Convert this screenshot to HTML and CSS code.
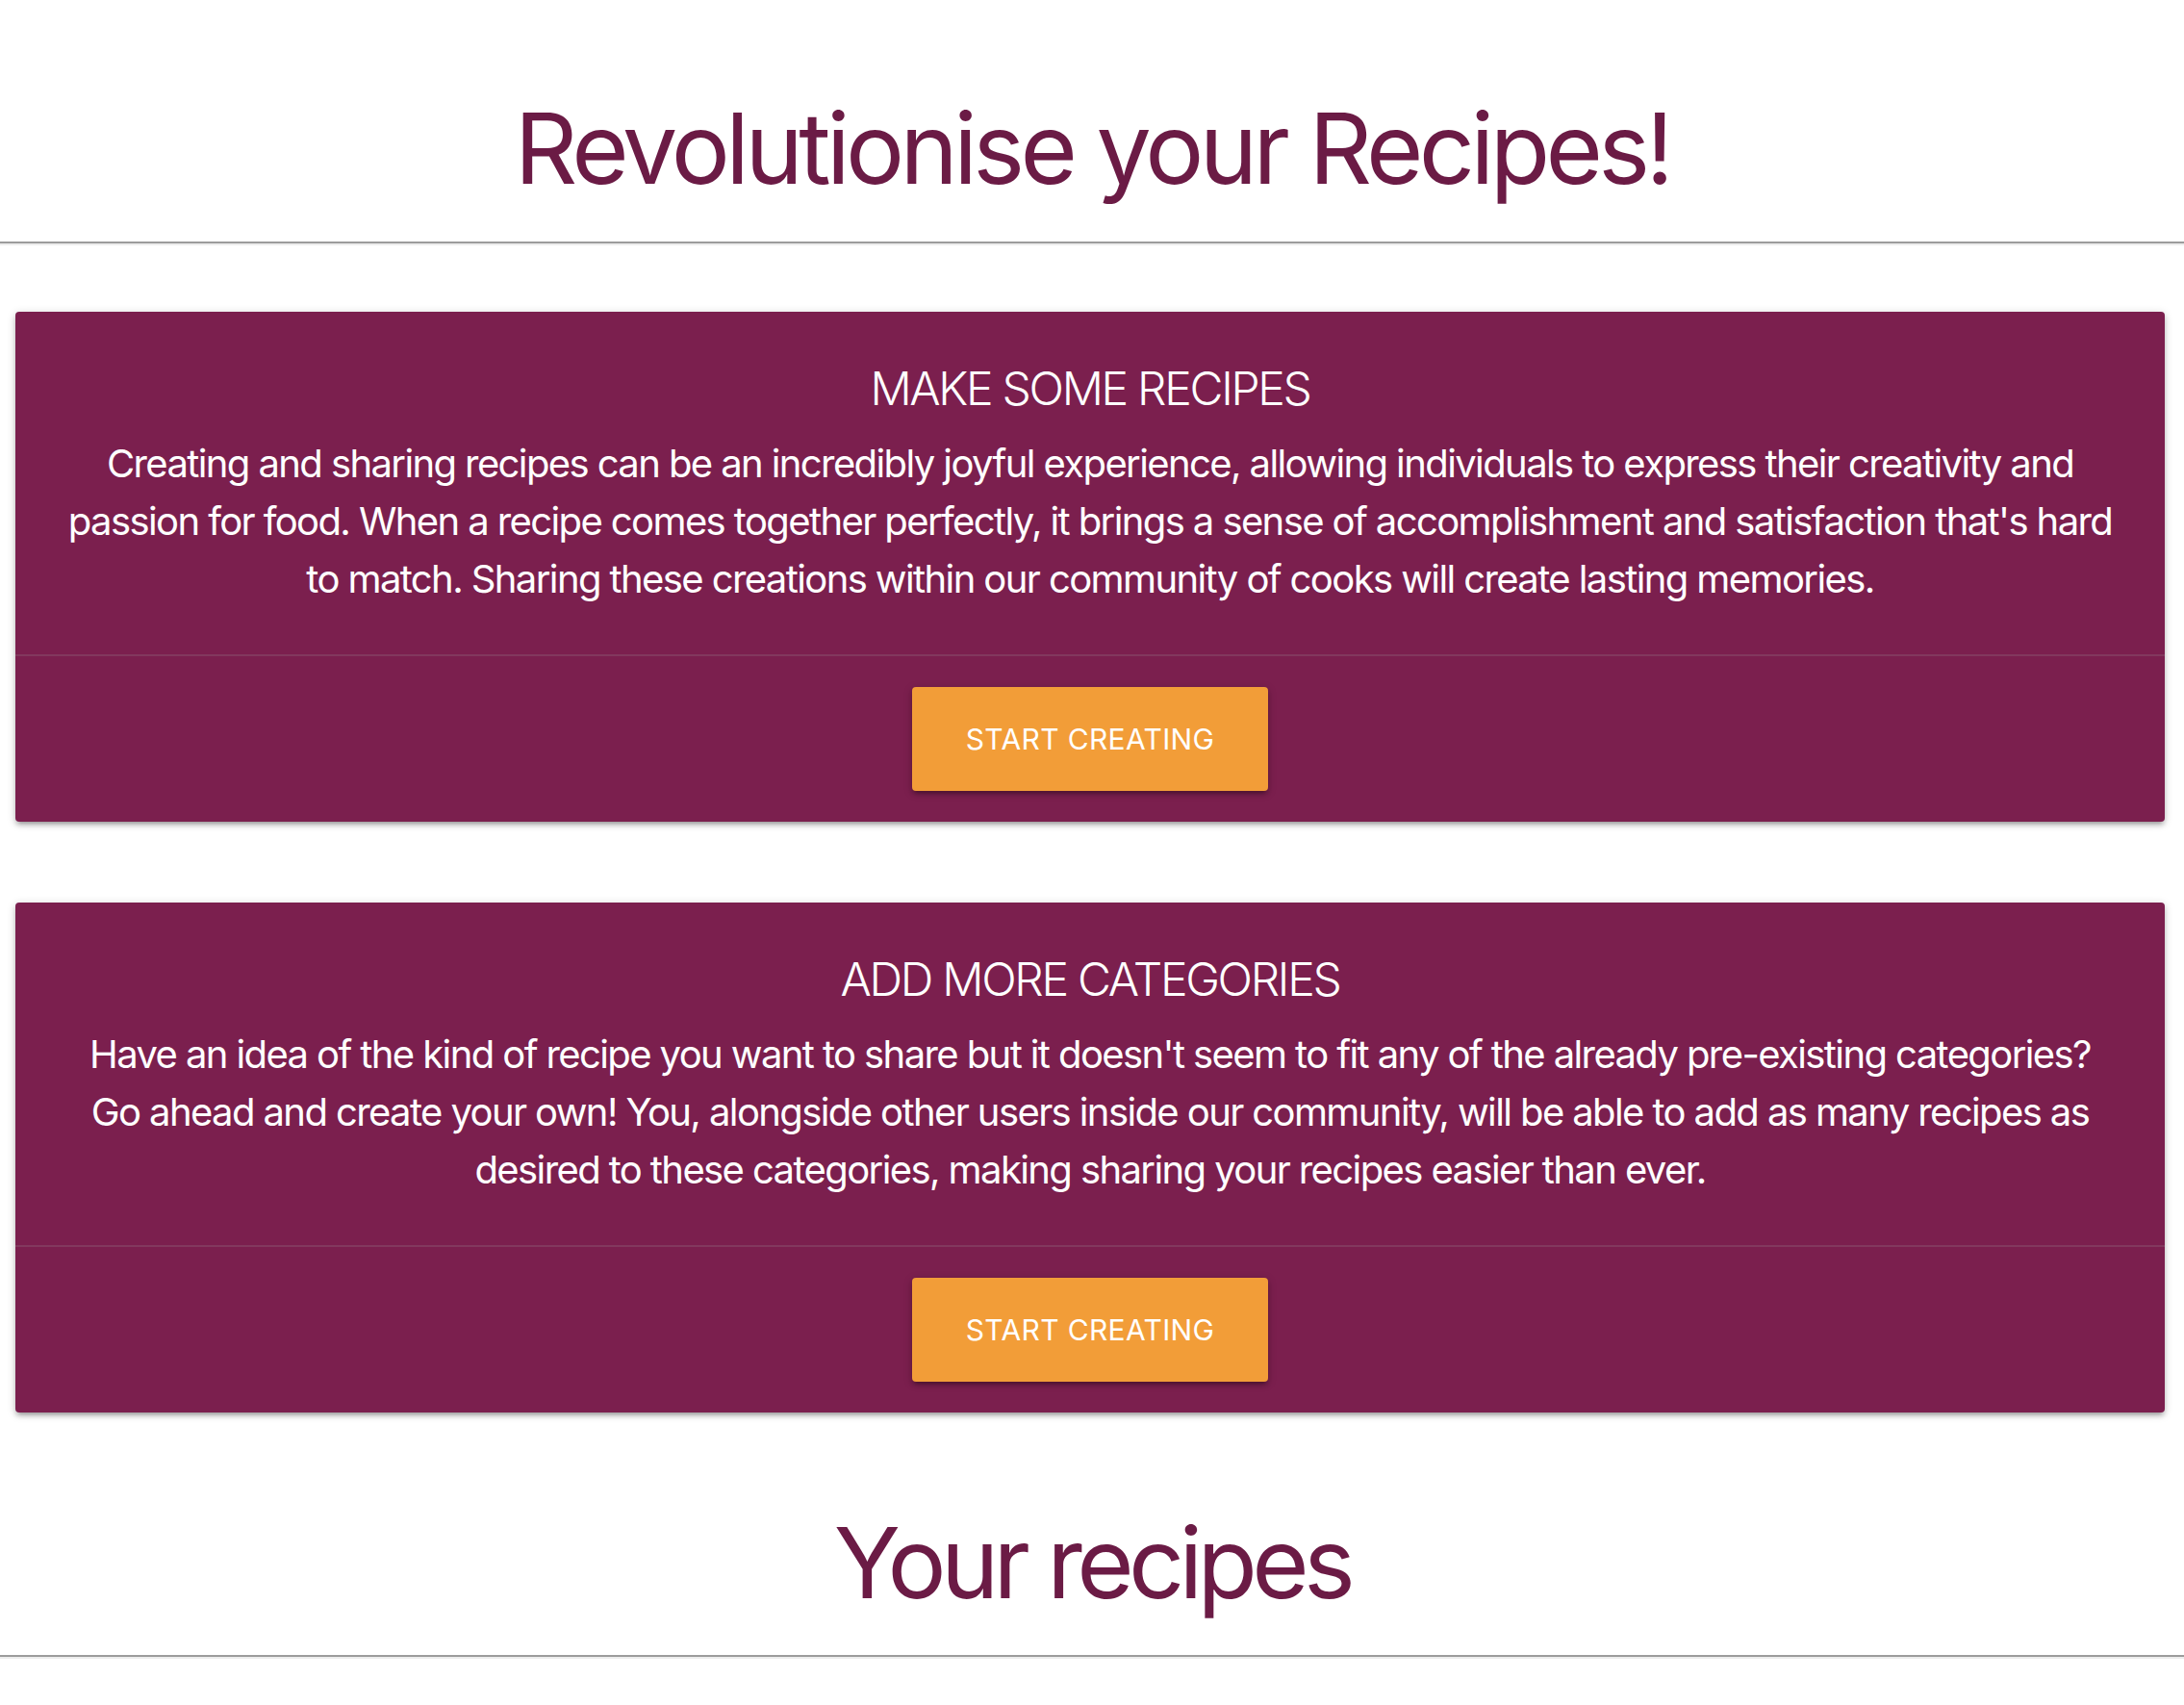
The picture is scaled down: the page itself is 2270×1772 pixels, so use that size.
FILE: index.html
```html
<!DOCTYPE html>
<html lang="en">
<head>
<meta charset="utf-8">
<title>Revolutionise your Recipes!</title>
<link rel="stylesheet" href="styles.css">
</head>
<body>
  <header class="section-head section-head--top">
    <h1 class="page-title">Revolutionise your Recipes!</h1>
  </header>
  <hr class="rule">

  <main class="cards">
    <section class="card">
      <div class="card-content">
        <h2 class="card-title">MAKE SOME RECIPES</h2>
        <p class="card-text">Creating and sharing recipes can be an incredibly joyful experience, allowing individuals to express their creativity and<br>passion for food. When a recipe comes together perfectly, it brings a sense of accomplishment and satisfaction that's hard<br>to match. Sharing these creations within our community of cooks will create lasting memories.</p>
      </div>
      <div class="card-action">
        <a class="btn" href="#">START CREATING</a>
      </div>
    </section>

    <section class="card">
      <div class="card-content">
        <h2 class="card-title">ADD MORE CATEGORIES</h2>
        <p class="card-text">Have an idea of the kind of recipe you want to share but it doesn't seem to fit any of the already pre-existing categories?<br>Go ahead and create your own! You, alongside other users inside our community, will be able to add as many recipes as<br>desired to these categories, making sharing your recipes easier than ever.</p>
      </div>
      <div class="card-action">
        <a class="btn" href="#">START CREATING</a>
      </div>
    </section>
  </main>

  <header class="section-head section-head--bottom">
    <h1 class="page-title page-title--tight">Your recipes</h1>
  </header>
  <hr class="rule">
</body>
</html>
```

FILE: styles.css
```css
html, body {
  margin: 0;
  padding: 0;
  background: #ffffff;
}

body {
  font-family: "Inter", "Roboto", "Liberation Sans", sans-serif;
  color: #333;
}

.section-head {
  text-align: center;
}

.section-head--top {
  padding-top: 93px;
}

.section-head--bottom {
  padding-top: 95px;
}

.page-title {
  margin: 0 0 36px 0;
  font-size: 102px;
  line-height: 122px;
  font-weight: 400;
  letter-spacing: -4.6px;
  color: #6b1b45;
}

.page-title--tight {
  margin-bottom: 35px;
  letter-spacing: -5.7px;
}

.rule {
  margin: 0;
  height: 0;
  border: 0;
  border-top: 2px solid #9c9c9c;
  border-bottom: 2px solid #ededed;
}

.cards {
  padding: 69px 20px 0 16px;
  display: flex;
  flex-direction: column;
  gap: 84px;
}

.card {
  background: #7b1f4e;
  border-radius: 4px;
  box-shadow: 0 4px 4px 0 rgba(0,0,0,0.14), 0 6px 2px -4px rgba(0,0,0,0.12), 0 2px 10px 0 rgba(0,0,0,0.2);
  color: #ffffff;
}

.card-content {
  padding: 48px;
  text-align: center;
}

.card-title {
  margin: 0 0 16px 0;
  font-size: 48px;
  line-height: 64px;
  font-weight: 300;
  letter-spacing: -2.3px;
  color: #ffffff;
}

.card-text {
  margin: 0;
  font-size: 40px;
  line-height: 60px;
  font-weight: 400;
  letter-spacing: -1.6px;
  white-space: nowrap;
}

.card-action {
  border-top: 2px solid rgba(160,160,160,0.2);
  padding: 32px 48px;
  display: flex;
  justify-content: center;
}

.btn {
  display: inline-flex;
  align-items: center;
  justify-content: center;
  width: 370px;
  height: 108px;
  box-sizing: border-box;
  background: #f29d38;
  color: #ffffff;
  text-decoration: none;
  font-size: 30px;
  letter-spacing: 0.35px;
  font-weight: 400;
  border-radius: 4px;
  box-shadow: 0 4px 4px 0 rgba(0,0,0,0.14), 0 6px 2px -4px rgba(0,0,0,0.12), 0 2px 10px 0 rgba(0,0,0,0.2);
}
```
